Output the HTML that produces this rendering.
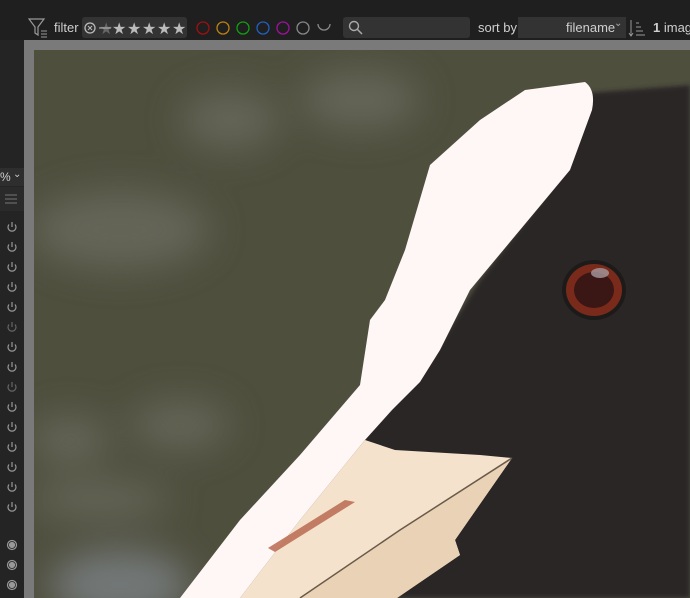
<!DOCTYPE html><html><head><style>
body{margin:0;width:690px;height:598px;overflow:hidden;background:#202020;font-family:"Liberation Sans",sans-serif;position:relative}
.a{position:absolute}
.t{color:#cfcfcf;font-size:13px}
</style></head><body>
<div class="a" style="left:0;top:0;width:690px;height:40px;background:#1f1f1f"></div>
<svg class="a" style="top:17px;left:28px" width="20" height="22" viewBox="0 0 20 22"><path d="M1 2H16L10 10V18L7 16V10Z" fill="none" stroke="#999" stroke-width="1.2"/><path d="M13 14H19M13 17H19M13 20H19" stroke="#999"/></svg>
<div class="a t" style="left:54px;top:20px">filter</div>
<div class="a" style="left:82px;top:17px;width:105px;height:21px;background:#333;border-radius:3px"></div>
<svg class="a" style="left:83px;top:18px" width="104" height="20"><circle cx="7" cy="10" r="5" fill="none" stroke="#bbb" stroke-width="1.3"/><path d="M5 8l4 4M9 8l-4 4" stroke="#bbb"/>
<g fill="#bbb"><text x="16" y="16" font-size="16" fill="#666">★</text><line x1="16" y1="10" x2="28" y2="10" stroke="#bbb"/><text x="29" y="16" font-size="16">★</text><text x="44" y="16" font-size="16">★</text><text x="59" y="16" font-size="16">★</text><text x="74" y="16" font-size="16">★</text><text x="89" y="16" font-size="16">★</text></g></svg>
<svg class="a" style="left:195px;top:19px" width="140" height="18" fill="none" stroke-width="1.3"><circle cx="8" cy="9" r="6" stroke="#a01010"/><circle cx="28" cy="9" r="6" stroke="#c08010"/><circle cx="48" cy="9" r="6" stroke="#10a010"/><circle cx="68" cy="9" r="6" stroke="#2060c0"/><circle cx="88" cy="9" r="6" stroke="#a010a0"/><circle cx="108" cy="9" r="6" stroke="#888"/><path d="M123 5a6 6 0 0 0 12 0" stroke="#888"/></svg>
<div class="a" style="left:343px;top:17px;width:127px;height:21px;background:#333;border-radius:3px"></div>
<svg class="a" style="left:348px;top:20px" width="16" height="16"><circle cx="6" cy="6" r="4.5" fill="none" stroke="#aaa" stroke-width="1.4"/><path d="M9.5 9.5L14 14" stroke="#aaa" stroke-width="1.5"/></svg>
<div class="a t" style="left:478px;top:20px">sort by</div>
<div class="a" style="left:518px;top:17px;width:108px;height:21px;background:#333"></div>
<div class="a t" style="left:566px;top:20px">filename</div>
<div class="a" style="left:614px;top:18px;color:#aaa;font-size:10px">⌄</div>
<svg class="a" style="left:628px;top:18px" width="18" height="20" stroke="#999"><path d="M3 2V18M1 15l2 3 2-3M8 5h3M8 9h5M8 13h7M8 17h9"/></svg>
<div class="a t" style="left:653px;top:20px;white-space:nowrap"><b>1</b> imag</div>
<div class="a" style="left:0;top:40px;width:24px;height:558px;background:#242424"></div>
<div class="a" style="left:0;top:168px;width:24px;height:18px;background:#2e2e2e"></div>
<div class="a t" style="left:0;top:170px;font-size:12px">%</div><div class="a" style="left:13px;top:169px;color:#ccc;font-size:10px">⌄</div>
<div class="a" style="left:0;top:187px;width:24px;height:24px;background:#2a2a2a"></div>
<svg class="a" style="left:5px;top:193px" width="12" height="12" stroke="#777"><path d="M0 2h12M0 6h12M0 10h12"/></svg>
<svg class="a" style="left:4px;top:218px" width="16" height="380" fill="none" stroke="#999" stroke-width="1.2">
<g id="p"><path d="M5 6.5a4 4 0 1 0 6 0M8 4v5"/></g>
<use href="#p" y="20"/><use href="#p" y="40"/><use href="#p" y="60"/><use href="#p" y="80"/><use href="#p" y="100" stroke="#666"/><use href="#p" y="120"/><use href="#p" y="140"/><use href="#p" y="160" stroke="#666"/><use href="#p" y="180"/><use href="#p" y="200"/><use href="#p" y="220"/><use href="#p" y="240"/><use href="#p" y="260"/><use href="#p" y="280"/>
<circle cx="8" cy="327" r="4.5"/><circle cx="8" cy="327" r="2.5" fill="#999"/><circle cx="8" cy="347" r="4.5"/><circle cx="8" cy="347" r="2.5" fill="#999"/><circle cx="8" cy="367" r="4.5"/><circle cx="8" cy="367" r="2.5" fill="#999"/></svg>
<div class="a" style="left:24px;top:40px;width:666px;height:558px;background:#7a7a7a"></div>
<svg class="a" style="left:34px;top:50px" width="656" height="548" viewBox="34 50 656 548">
<defs><filter id="b"><feGaussianBlur stdDeviation="18"/></filter><filter id="s"><feGaussianBlur stdDeviation="2"/></filter></defs>
<rect x="34" y="50" width="656" height="548" fill="#4f4f3e"/>
<g filter="url(#b)" fill="#6c6c60" opacity=".75"><ellipse cx="230" cy="120" rx="50" ry="30"/><ellipse cx="360" cy="100" rx="60" ry="30"/><ellipse cx="120" cy="230" rx="90" ry="40"/><ellipse cx="70" cy="440" rx="40" ry="25"/><ellipse cx="180" cy="425" rx="50" ry="25"/><ellipse cx="100" cy="500" rx="70" ry="20"/><ellipse cx="120" cy="585" rx="70" ry="35" fill="#80868c"/></g>
<path filter="url(#s)" d="M560 95 L690 85 L690 598 L300 598 L360 440 L430 360 L480 280 L545 195 Z" fill="#2a2826"/>
<path d="M525 90 L585 82 Q596 90 592 110 L570 170 L520 230 L470 290 L440 350 L420 382 L392 410 L365 440 L300 520 L240 598 L180 598 L240 520 L300 455 L360 385 L370 320 L385 300 L405 250 L430 165 L480 120 Z" fill="#fff6f6"/>
<path d="M365 440 L395 450 L480 455 L512 458 L455 540 L460 555 L397 598 L240 598 L300 520 Z" fill="#f4e2cc"/>
<path d="M512 458 L455 540 L460 555 L397 598 L300 598 L400 530 Z" fill="#ead2b6"/>
<path d="M268 548 L345 500 L355 502 L275 552 Z" fill="#b86a50" opacity=".85"/>
<path d="M300 598 L400 530 L512 458" stroke="#6a5a4a" stroke-width="1.5" fill="none"/>
<ellipse cx="594" cy="290" rx="32" ry="30" fill="#1d1b1a"/>
<ellipse cx="594" cy="290" rx="28" ry="26" fill="#7a2a1a"/>
<ellipse cx="594" cy="290" rx="20" ry="18" fill="#3a1614"/>
<ellipse cx="600" cy="273" rx="9" ry="5" fill="#a79aa0" opacity=".8"/>
</svg>
</body></html>
